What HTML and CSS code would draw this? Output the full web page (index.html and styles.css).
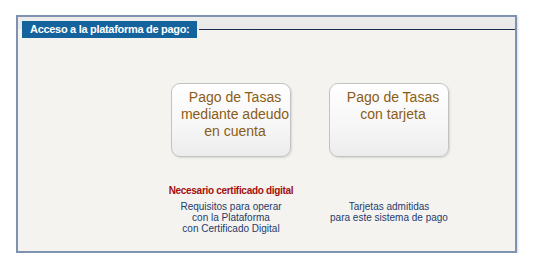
FILE: index.html
```html
<!DOCTYPE html>
<html lang="es">
<head>
    <meta charset="UTF-8">
    <title>Acceso a la plataforma de pago</title>
    <link rel="stylesheet" href="styles.css">
</head>
<body>
    <div class="panel">
        <div class="panel-head">
            <span class="panel-tab">Acceso a la plataforma de pago:</span>
            <span class="panel-line"></span>
        </div>

        <div class="options">
            <div class="option">
                <a class="pay-btn" href="#">Pago de Tasas mediante adeudo en cuenta</a>
                <p class="note">Necesario certificado digital</p>
                <p class="info">Requisitos para operar<br>con la Plataforma<br>con Certificado Digital</p>
            </div>
            <div class="option">
                <a class="pay-btn" href="#">Pago de Tasas con tarjeta</a>
                <p class="note"></p>
                <p class="info">Tarjetas admitidas<br>para este sistema de pago</p>
            </div>
        </div>
    </div>
</body>
</html>
```

FILE: styles.css
```css
body {
    margin: 0;
    background: #fff;
    font-family: Arial, "Liberation Sans", sans-serif;
}
.panel {
    box-sizing: border-box;
    width: 501px;
    height: 238px;
    margin: 15px 0 0 16px;
    border: 2px solid #7f92b2;
    background: linear-gradient(#ececec 0, #e9e9e9 12px, #f4f3ef 12px);
    box-shadow: 1px 1px 2px rgba(0, 0, 0, 0.15);
}
.panel-head {
    display: flex;
    align-items: center;
    padding: 4px 0 0 4px;
}
.panel-tab {
    height: 17px;
    line-height: 17px;
    padding: 0 8px 0 8px;
    background: #14639d;
    color: #fff;
    font-size: 11px;
    font-weight: bold;
    letter-spacing: -0.3px;
}
.panel-line {
    flex: 1;
    margin-left: 2px;
    border-top: 1px solid #1b2d52;
}
.options {
    display: flex;
    gap: 8px;
    padding: 45px 0 0 138px;
}
.option {
    width: 150px;
    display: flex;
    flex-direction: column;
    align-items: center;
    text-align: center;
}
.pay-btn {
    box-sizing: border-box;
    width: 120px;
    height: 74px;
    padding: 5px 0 0 8px;
    border: 1px solid #c3c3c3;
    border-radius: 9px;
    background: linear-gradient(#ffffff, #f6f6f6 60%, #ececec);
    box-shadow: 1px 1px 2px rgba(0, 0, 0, 0.12);
    color: #8b5c16;
    font-size: 14px;
    line-height: 17px;
    text-decoration: none;
}
.note {
    height: 11px;
    margin: 28px 0 0 0;
    color: #a20e0e;
    font-size: 10px;
    font-weight: bold;
    line-height: 11px;
    letter-spacing: -0.3px;
    white-space: nowrap;
}
.info {
    margin: 5px 0 0 0;
    color: #1f3c6c;
    font-size: 10px;
    line-height: 11px;
    white-space: nowrap;
}
```
